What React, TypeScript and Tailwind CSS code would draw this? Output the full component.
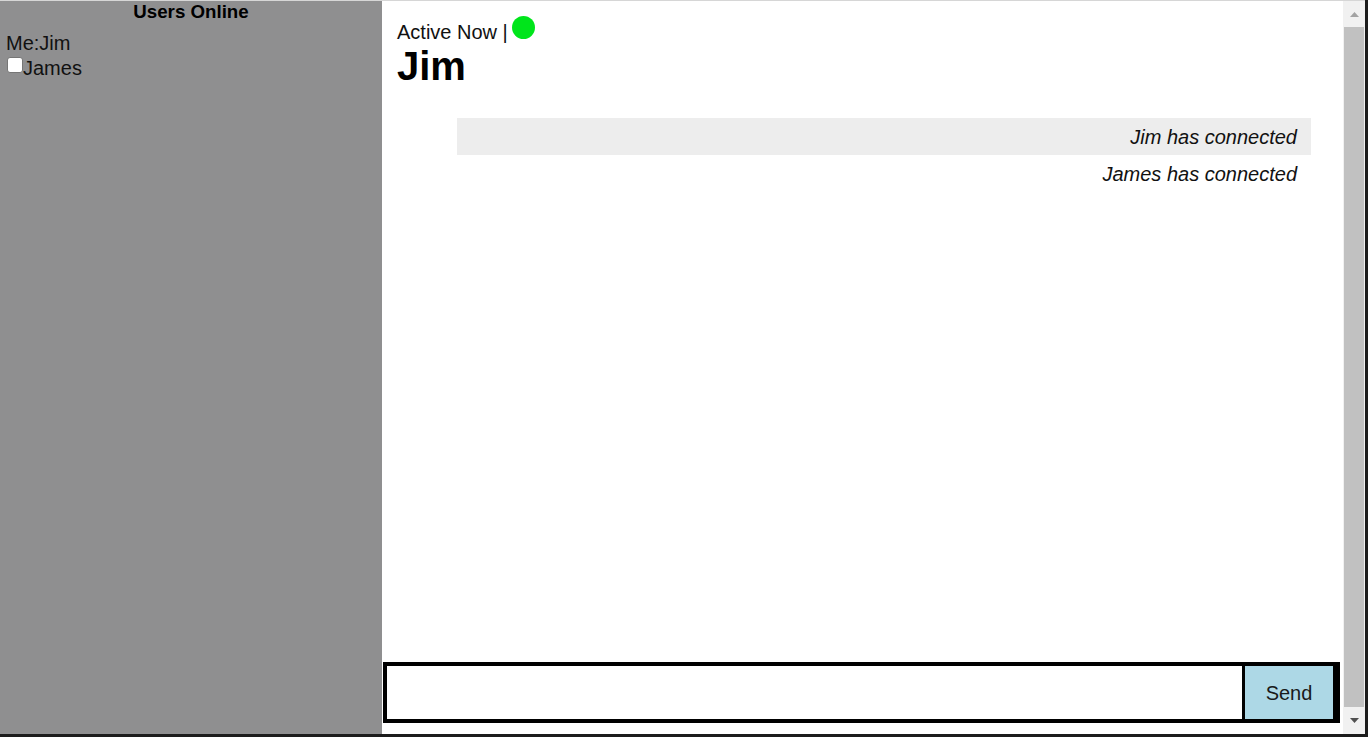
import React, { useState } from 'react';

type Message = { id: number; text: string };

const messages: Message[] = [
  { id: 1, text: 'Jim has connected' },
  { id: 2, text: 'James has connected' },
];

// fake window scrollbar drawn at the right of the chat
const ScrollBar: React.FC = () => (
  <div className="w-[22px] bg-[#f1f1f1] flex flex-col">
    <div className="h-[26px] flex items-center justify-center">
      <svg width="9" height="5" viewBox="0 0 9 5">
        <polygon points="0,5 9,5 4.5,0" fill="#a3a3a3" />
      </svg>
    </div>
    <div className="flex-1 bg-[#c1c1c1] mx-px" />
    <div className="h-[27px] flex items-center justify-center">
      <svg width="9" height="5" viewBox="0 0 9 5">
        <polygon points="0,0 9,0 4.5,5" fill="#505050" />
      </svg>
    </div>
  </div>
);

const App: React.FC = () => {
  const [draft, setDraft] = useState('');
  const [checked, setChecked] = useState(false);

  return (
    <div className="h-[737px] w-full flex flex-col border-r-[3px] border-[#1c1c1c] font-['Liberation_Sans',Arial,sans-serif] text-[#111]">
      <div className="h-px bg-[#d6d6d6]" />
      <div className="flex-1 flex min-h-0">
        {/* Sidebar */}
        <aside className="w-[382px] bg-[#8f8f90] flex flex-col">
          <h3 className="text-[18.72px] font-bold text-center leading-[22px] text-black">Users Online</h3>
          <div className="pl-[6px] mt-[9px] text-[20px] leading-[23px]">Me:Jim</div>
          <label className="flex items-start text-[20px] leading-[23px] mt-[2px]">
            <input
              type="checkbox"
              checked={checked}
              onChange={() => setChecked(!checked)}
              className="w-4 h-4 ml-[7px] m-0 appearance-none bg-white rounded-[3px] border border-[#767676]"
            />
            <span>James</span>
          </label>
        </aside>

        {/* Chat */}
        <main className="flex-1 bg-white flex flex-col">
          <header className="pl-[15px] pt-[20px]">
            <div className="flex items-center text-[20px] leading-[23px]">
              <span>Active Now |</span>
              <span className="ml-[4px] -mt-[11px] w-[23px] h-[23px] rounded-full bg-[#00e51b]" />
            </div>
            <h1 className="text-[40px] font-bold leading-[44px] text-black">Jim</h1>
          </header>

          <div className="flex-1 pt-[30px] pl-[75px] pr-[32px]">
            {messages.map((m, i) => (
              <div
                key={m.id}
                className={`h-[37px] flex items-center justify-end pr-[14px] text-[20px] italic ${i % 2 === 0 ? 'bg-[#ededed]' : ''}`}
              >
                {m.text}
              </div>
            ))}
          </div>

          <form
            onSubmit={(e) => e.preventDefault()}
            className="h-[61px] ml-px mr-[3px] mb-[11px] bg-black p-[4px] pr-[7px] flex gap-[3px]"
          >
            <input
              value={draft}
              onChange={(e) => setDraft(e.target.value)}
              className="flex-1 bg-white outline-none px-2 text-[20px]"
            />
            <button type="submit" className="w-[88px] bg-[#add8e6] text-[20px] text-[#1a1a1a]">
              Send
            </button>
          </form>
        </main>

        <ScrollBar />
      </div>
      <div className="h-[3px] bg-[#1c1c1c]" />
    </div>
  );
};

export default App;
